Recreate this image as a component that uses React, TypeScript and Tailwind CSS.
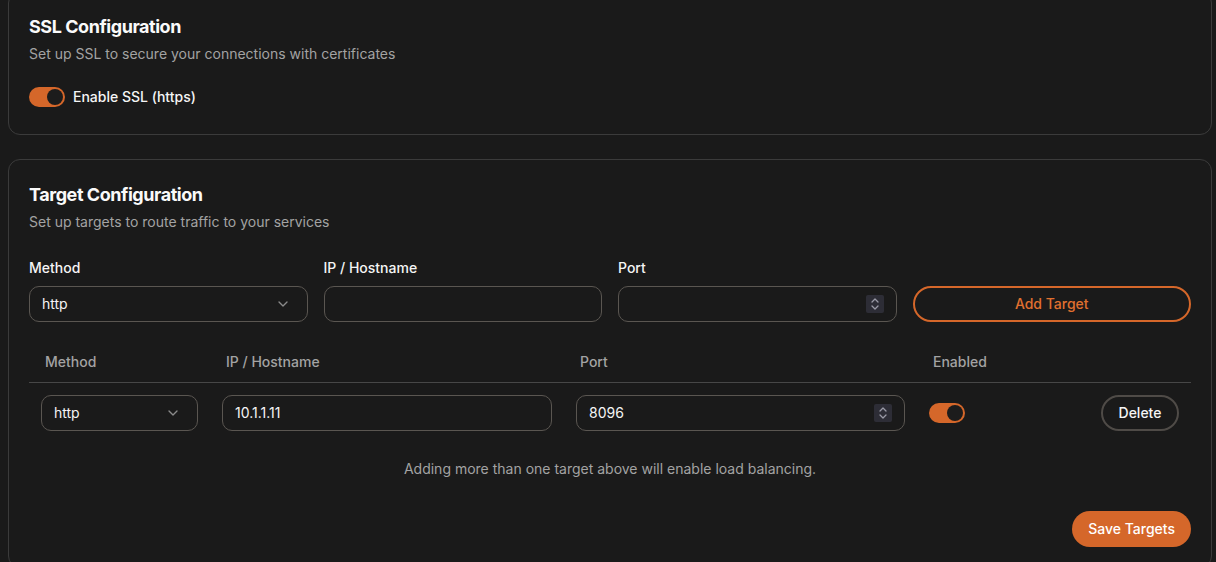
import React from "react";

const ORANGE = "bg-[#d5672a]";

function Toggle() {
  return (
    <div className={`flex h-5 w-9 shrink-0 items-center justify-end rounded-full ${ORANGE} p-[2px]`}>
      <div className="h-4 w-4 rounded-full bg-[#1c1c1c]" />
    </div>
  );
}

function Chevron() {
  return (
    <svg width="16" height="16" viewBox="0 0 24 24" fill="none" stroke="#8a8a8a" strokeWidth="2" strokeLinecap="round" strokeLinejoin="round">
      <path d="m6 9 6 6 6-6" />
    </svg>
  );
}

function Spinner() {
  return (
    <div className="flex h-[18px] w-[18px] flex-col items-center justify-center rounded-[2px] bg-[#2d2d36]">
      <svg width="10" height="14" viewBox="0 0 10 14" fill="none" stroke="#9a9aa6" strokeWidth="1.3" strokeLinecap="round" strokeLinejoin="round">
        <path d="M2 5 5 2 8 5" />
        <path d="M2 9 5 12 8 9" />
      </svg>
    </div>
  );
}

function SelectBox({ className = "" }: { className?: string }) {
  return (
    <div className={`flex h-9 items-center justify-between rounded-[10px] border border-[#5a5651] pl-3 pr-4 text-sm text-[#f5f5f5] ${className}`}>
      <span>http</span>
      <Chevron />
    </div>
  );
}

function TextBox({ value = "", className = "" }: { value?: string; className?: string }) {
  return (
    <div className={`flex h-9 items-center rounded-[10px] border border-[#5a5651] px-3 text-sm text-[#f5f5f5] ${className}`}>
      <span>{value}</span>
    </div>
  );
}

function NumberBox({ value = "", className = "" }: { value?: string; className?: string }) {
  return (
    <div className={`flex h-9 items-center justify-between rounded-[10px] border border-[#5a5651] pl-3 pr-[12px] text-sm text-[#f5f5f5] ${className}`}>
      <span>{value}</span>
      <Spinner />
    </div>
  );
}

export default function App() {
  return (
    <div
      className="h-[562px] w-full overflow-hidden bg-[#1a1a1a] pl-2 pr-1"
      style={{ fontFamily: "Inter, 'Noto Sans', sans-serif" }}
    >
      <div className="-mt-[9px] flex flex-col gap-6">
        {/* SSL card */}
        <div className="rounded-xl border border-[#3b3b3b] px-5 pb-[27px] pt-[21px]">
          <h2 className="text-lg font-bold leading-7 tracking-tight text-[#fafafa]">SSL Configuration</h2>
          <p className="mt-[3px] text-sm leading-5 text-[#a3a3a3]">
            Set up SSL to secure your connections with certificates
          </p>
          <div className="mt-[23px] flex items-center gap-2">
            <Toggle />
            <span className="text-sm font-medium leading-5 text-[#f5f5f5]">Enable SSL (https)</span>
          </div>
        </div>

        {/* Target card */}
        <div className="rounded-xl border border-[#3b3b3b] px-5 pb-5 pt-[21px]">
          <h2 className="text-lg font-bold leading-7 tracking-tight text-[#fafafa]">Target Configuration</h2>
          <p className="mt-[3px] text-sm leading-5 text-[#a3a3a3]">
            Set up targets to route traffic to your services
          </p>

          <div className="mt-[26px] grid grid-cols-4 gap-x-4">
            <div className="flex flex-col gap-2">
              <span className="text-sm font-medium leading-5 text-[#f5f5f5]">Method</span>
              <SelectBox />
            </div>
            <div className="flex flex-col gap-2">
              <span className="text-sm font-medium leading-5 text-[#f5f5f5]">IP / Hostname</span>
              <TextBox />
            </div>
            <div className="flex flex-col gap-2">
              <span className="text-sm font-medium leading-5 text-[#f5f5f5]">Port</span>
              <NumberBox />
            </div>
            <div className="flex flex-col justify-end">
              <button className="flex h-9 items-center justify-center rounded-full border-2 border-[#d5672a] text-sm font-medium text-[#e0702f]">
                Add Target
              </button>
            </div>
          </div>

          {/* table */}
          <div className="mt-5">
            <div className="grid h-[41px] grid-cols-[181px_354px_353px_1fr_auto] items-center border-b border-[#474747] text-sm font-medium text-[#a3a3a3]">
              <span className="px-4">Method</span>
              <span className="px-4">IP / Hostname</span>
              <span className="px-4">Port</span>
              <span className="px-4">Enabled</span>
              <span className="w-[102px]" />
            </div>
            <div className="grid grid-cols-[181px_354px_353px_1fr_auto] items-center py-3">
              <div className="px-3">
                <SelectBox />
              </div>
              <div className="px-3">
                <TextBox value="10.1.1.11" />
              </div>
              <div className="px-3">
                <NumberBox value="8096" />
              </div>
              <div className="px-3">
                <Toggle />
              </div>
              <div className="flex justify-end px-3">
                <button className="flex h-9 w-[78px] items-center justify-center rounded-full border-2 border-[#4f4b47] text-sm font-medium text-[#f5f5f5]">
                  Delete
                </button>
              </div>
            </div>
            <p className="mt-[16px] text-center text-sm leading-5 text-[#a3a3a3]">
              Adding more than one target above will enable load balancing.
            </p>
          </div>

          <div className="mt-8 flex justify-end">
            <button className={`h-9 rounded-full ${ORANGE} px-4 text-sm font-medium text-white`}>
              Save Targets
            </button>
          </div>
        </div>
      </div>
    </div>
  );
}
